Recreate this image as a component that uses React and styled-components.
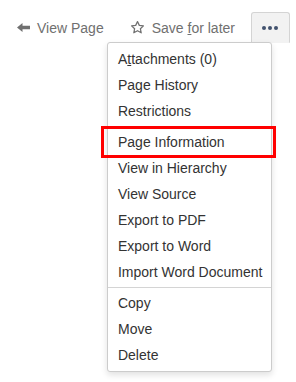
import React from "react";
import styled, { createGlobalStyle } from "styled-components";

const Global = createGlobalStyle`
  html, body { margin: 0; padding: 0; background: #fff; }
  body { font-family: "Liberation Sans", Arial, sans-serif; font-size: 14px; }
`;

const Page = styled.div`
  width: 296px;
  height: 382px;
  padding-top: 12px;
  box-sizing: border-box;
`;

const Toolbar = styled.div`
  display: flex;
  align-items: center;
  height: 31px;
  padding-left: 17px;
`;

const ToolLink = styled.a`
  display: flex;
  align-items: center;
  gap: ${(p) => p.$gap}px;
  margin-right: ${(p) => p.$after}px;
  color: #707070;
  font-size: 14px;
  text-decoration: none;
  cursor: pointer;
  line-height: 16px;
`;

const U = styled.span`
  text-decoration: underline;
`;

const MoreWrap = styled.div`
  position: relative;
  height: 31px;
`;

const MoreButton = styled.button`
  width: 39px;
  height: 31px;
  box-sizing: border-box;
  border: 1px solid #d4d4d4;
  border-bottom-color: transparent;
  border-radius: 3px 3px 0 0;
  background: #f2f2f2;
  display: flex;
  align-items: center;
  justify-content: center;
  padding: 0;
`;

const Menu = styled.ul`
  position: absolute;
  top: 30px;
  left: -144px;
  width: 165px;
  box-sizing: border-box;
  margin: 0;
  padding: 3px 0;
  list-style: none;
  background: #fff;
  border: 1px solid #cccccc;
  border-radius: 3px;
  box-shadow: 0 3px 6px rgba(0, 0, 0, 0.12);
  z-index: 2;
`;

const Item = styled.li`
  position: relative;
  height: 26px;
  line-height: 26px;
  padding: 0 10px;
  color: #333;
  font-size: 14px;
  white-space: nowrap;

  ${(p) =>
    p.$marked &&
    `
    &::after {
      content: "";
      position: absolute;
      left: -7px;
      right: -5px;
      top: -3px;
      bottom: -3px;
      border: 3px solid #ff0000;
    }
  `}
`;

const Separator = styled.li`
  height: 1px;
  margin: 2px 0;
  background: #d4d4d4;
`;

const ArrowIcon = () => (
  <svg width="13" height="9" viewBox="0 0 13 9">
    <path d="M0 4.5 L5.5 0 L5.5 2.8 L13 2.8 L13 6.2 L5.5 6.2 L5.5 9 Z" fill="#707070" />
  </svg>
);

const StarIcon = () => (
  <svg width="15" height="15" viewBox="0 0 24 24">
    <path
      d="M12 2.5 L14.9 8.6 L21.5 9.4 L16.6 13.9 L17.9 20.5 L12 17.2 L6.1 20.5 L7.4 13.9 L2.5 9.4 L9.1 8.6 Z"
      fill="none"
      stroke="#707070"
      strokeWidth="2"
      strokeLinejoin="round"
    />
  </svg>
);

const DotsIcon = () => (
  <svg width="16" height="4" viewBox="0 0 16 4">
    <circle cx="2" cy="2" r="2" fill="#42526e" />
    <circle cx="8" cy="2" r="2" fill="#42526e" />
    <circle cx="14" cy="2" r="2" fill="#42526e" />
  </svg>
);

const groups = [
  [
    <>
      A<U>t</U>tachments (0)
    </>,
    "Page History",
    "Restrictions",
  ],
  [
    "Page Information",
    "View in Hierarchy",
    "View Source",
    "Export to PDF",
    "Export to Word",
    "Import Word Document",
  ],
  ["Copy", "Move", "Delete"],
];

export default function App() {
  return (
    <Page>
      <Global />
      <Toolbar>
        <ToolLink $gap={7} $after={26}>
          <ArrowIcon />
          View Page
        </ToolLink>
        <ToolLink $gap={7} $after={16}>
          <StarIcon />
          <span>
            Save <U>f</U>or later
          </span>
        </ToolLink>
        <MoreWrap>
          <MoreButton aria-label="More">
            <DotsIcon />
          </MoreButton>
          <Menu>
            {groups.map((g, gi) => (
              <React.Fragment key={gi}>
                {gi > 0 && <Separator />}
                {g.map((label, i) => (
                  <Item key={i} $marked={label === "Page Information"}>
                    {label}
                  </Item>
                ))}
              </React.Fragment>
            ))}
          </Menu>
        </MoreWrap>
      </Toolbar>
    </Page>
  );
}
